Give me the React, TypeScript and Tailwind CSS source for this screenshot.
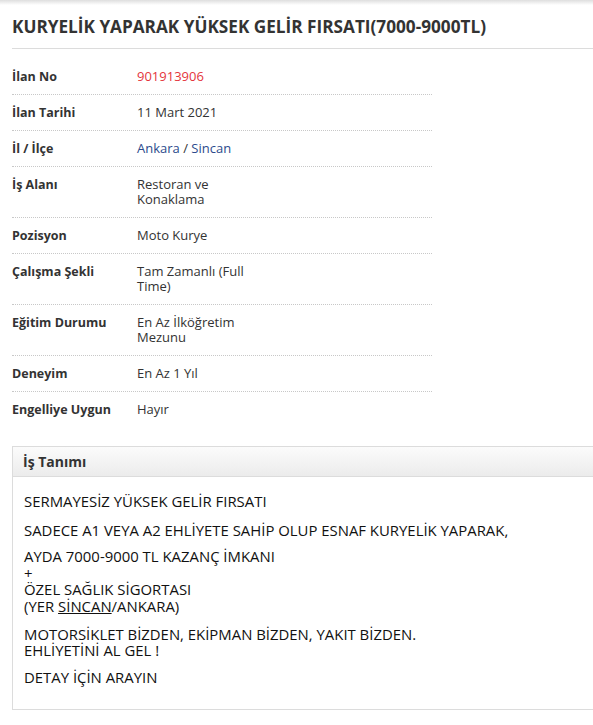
import React from 'react';

type Row = { label: string; value: React.ReactNode };

const rows: Row[] = [
    { label: 'İlan No', value: <span className="text-[#e4353c]">901913906</span> },
    { label: 'İlan Tarihi', value: '11 Mart 2021' },
    {
        label: 'İl / İlçe',
        value: (
            <span className="text-[#2c4a8c]">
                Ankara <span className="text-[#333]">/</span> Sincan
            </span>
        ),
    },
    { label: 'İş Alanı', value: 'Restoran ve Konaklama' },
    { label: 'Pozisyon', value: 'Moto Kurye' },
    { label: 'Çalışma Şekli', value: 'Tam Zamanlı (Full Time)' },
    { label: 'Eğitim Durumu', value: 'En Az İlköğretim Mezunu' },
    { label: 'Deneyim', value: 'En Az 1 Yıl' },
    { label: 'Engelliye Uygun', value: 'Hayır' },
];

const App = () => {
    return (
        <div className="min-h-screen bg-white text-[#333]" style={{ fontFamily: '"Open Sans", sans-serif' }}>
            <div className="h-[5px] bg-gradient-to-b from-[#dedede] to-white" />
            <div className="pl-3">
                <h1 className="pt-[10px] pb-[9px] text-[17.2px] font-bold leading-[24px] text-[#333] border-b border-[#dcdcdc]">
                    KURYELİK YAPARAK YÜKSEK GELİR FIRSATI(7000-9000TL)
                </h1>

                <div className="pt-[10px] w-[420px]">
                    {rows.map((row, i) => (
                        <div
                            key={row.label}
                            className={`flex pt-[10px] pb-[10px] leading-[15px] ${
                                i < rows.length - 1 ? 'border-b border-dotted border-[#c8c8c8]' : ''
                            }`}
                        >
                            <div className="w-[125px] text-[12.5px] font-bold">{row.label}</div>
                            <div className="w-[118px] text-[13px]">{row.value}</div>
                        </div>
                    ))}
                </div>

                <div className="mt-[19px] border border-[#dcdcdc] border-r-0">
                    <div className="h-[30px] flex items-center pl-[10px] bg-gradient-to-b from-[#fbfbfb] to-[#ececec] border-b border-[#dcdcdc] text-[14px] font-bold">
                        İş Tanımı
                    </div>
                    <div className="px-[11px] pt-[16px] pb-[24px] text-[14.9px] leading-[16.6px] text-[#111]">
                        <p className="mb-[12px]">SERMAYESİZ YÜKSEK GELİR FIRSATI</p>
                        <p className="mb-[10px]">SADECE A1 VEYA A2 EHLİYETE SAHİP OLUP ESNAF KURYELİK YAPARAK,</p>
                        <p className="mb-[11px]">
                            AYDA 7000-9000 TL KAZANÇ İMKANI
                            <br />+
                            <br />
                            ÖZEL SAĞLIK SİGORTASI
                            <br />
                            (YER <span className="underline">SİNCAN</span>/ANKARA)
                        </p>
                        <p className="mb-[10px]">
                            MOTORSİKLET BİZDEN, EKİPMAN BİZDEN, YAKIT BİZDEN.
                            <br />
                            EHLİYETİNİ AL GEL !
                        </p>
                        <p>DETAY İÇİN ARAYIN</p>
                    </div>
                </div>
            </div>
        </div>
    );
};

export default App;
